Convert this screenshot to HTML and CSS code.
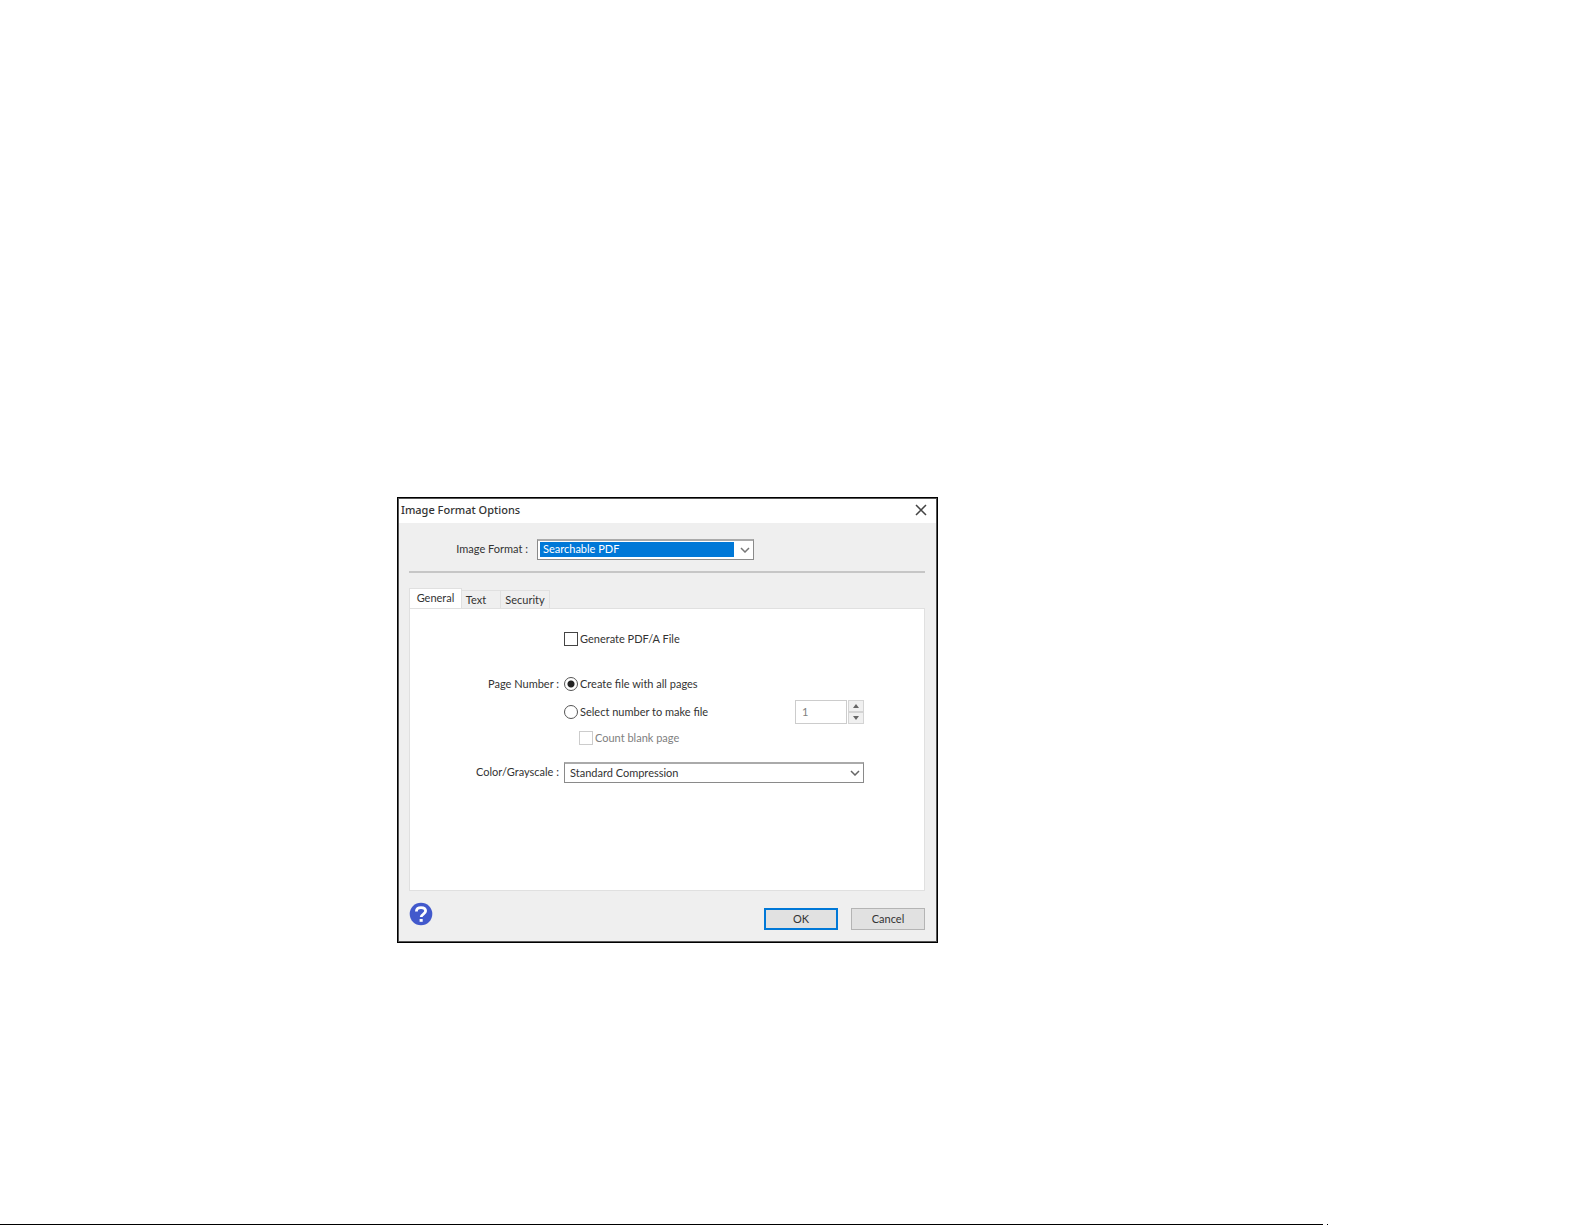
FILE: index.html
```html
<!DOCTYPE html>
<html lang="en">
<head>
<meta charset="utf-8">
<title>Image Format Options</title>
<link rel="stylesheet" href="styles.css">
</head>
<body>
<main class="page">
  <section class="dialog" role="dialog" aria-labelledby="dialog-title">
    <header class="titlebar">
      <h1 class="title" id="dialog-title">Image Format Options</h1>
      <button class="close" type="button" aria-label="Close">
        <svg width="12" height="12" viewBox="0 0 12 12"><path d="M1 1l10 10M11 1L1 11" fill="none" stroke="#444" stroke-width="1.5"/></svg>
      </button>
    </header>
    <form class="content">
      <div class="format-row">
        <label class="format-label" for="format">Image Format :</label>
        <span class="select-wrap format-wrap">
          <select class="select select-active" id="format"><option>Searchable PDF</option></select>
          <svg class="chevron" width="10" height="6" viewBox="0 0 10 6"><path d="M1 1l4 4 4-4" fill="none" stroke="#777" stroke-width="1.5"/></svg>
        </span>
      </div>
      <hr class="separator">
      <div class="tabs" role="tablist">
        <button class="tab tab-selected" type="button" role="tab" aria-selected="true">General</button>
        <button class="tab tab-text" type="button" role="tab">Text</button>
        <button class="tab tab-security" type="button" role="tab">Security</button>
      </div>
      <div class="panel" role="tabpanel">
        <div class="field">
          <label class="option"><input class="box" type="checkbox">Generate PDF/A File</label>
        </div>
        <div class="group" role="radiogroup" aria-labelledby="pages-label">
          <div class="field">
            <span class="label" id="pages-label">Page Number :</span>
            <label class="option"><input class="radio" type="radio" name="pages" checked>Create file with all pages</label>
          </div>
          <div class="field">
            <label class="option"><input class="radio" type="radio" name="pages">Select number to make file</label>
            <span class="spinner">
              <input class="number" type="text" value="1" aria-label="Number of pages" disabled>
              <span class="steps">
                <button class="step" type="button" aria-label="Increase" disabled><svg width="6" height="4" viewBox="0 0 6 4"><path d="M3 0l3 4H0z" fill="#666"/></svg></button>
                <button class="step" type="button" aria-label="Decrease" disabled><svg width="6" height="4" viewBox="0 0 6 4"><path d="M3 4l3-4H0z" fill="#666"/></svg></button>
              </span>
            </span>
          </div>
          <div class="field">
            <label class="option option-nested"><input class="box" type="checkbox" disabled>Count blank page</label>
          </div>
        </div>
        <div class="field">
          <label class="label" for="compression">Color/Grayscale :</label>
          <span class="select-wrap compression-wrap">
            <select class="select" id="compression"><option>Standard Compression</option></select>
            <svg class="chevron" width="10" height="6" viewBox="0 0 10 6"><path d="M1 1l4 4 4-4" fill="none" stroke="#666" stroke-width="1.5"/></svg>
          </span>
        </div>
      </div>
      <footer class="actions">
        <button class="help" type="button" aria-label="Help">
          <svg width="24" height="24" viewBox="0 0 24 24"><circle cx="12" cy="12" r="11.3" fill="#4259cc"/><path d="M7.4 9.4C7.4 6.7 9.3 5.6 12 5.6s4.6 1.2 4.6 3.5c0 3.1-4.4 2.9-4.4 6" fill="none" stroke="#fff" stroke-width="2.8"/><path d="M10.6 17h3.1v2.8h-3.1z" fill="#fff"/></svg>
        </button>
        <button class="button button-default" type="submit">OK</button>
        <button class="button" type="button">Cancel</button>
      </footer>
    </form>
  </section>
  <div class="page-rule"><span class="rule-line"></span><span class="rule-dot"></span></div>
</main>
</body>
</html>
```
FILE: styles.css
```css
* { box-sizing: border-box; }

body {
  margin: 0;
  background: #fff;
  color: #333;
  font-family: Lato, "Open Sans", sans-serif;
  font-size: 11px;
  line-height: 16px;
}

button, input, select { font: inherit; color: inherit; }
button { padding: 0; border: 0; background: none; }
svg { display: block; }

.page {
  display: flex;
  flex-direction: column;
  min-height: 100vh;
  padding: 497px 0 0 397px;
}

.dialog {
  width: 541px;
  border: 1px solid #000;
  box-shadow: inset 0 0 0 1px #555;
  padding: 1px;
  background: #efefef;
}

.titlebar {
  display: flex;
  align-items: center;
  justify-content: space-between;
  height: 24px;
  padding: 0 8px 2px 2px;
  background: #fff;
}

.title {
  margin: 0;
  font-family: "Noto Sans", "Open Sans", sans-serif;
  font-size: 11px;
  font-weight: 500;
}

.close { padding: 1px; }

.content { padding: 15px 11px 11px 10px; }

.format-row {
  display: flex;
  align-items: center;
  height: 22px;
}

.format-label { width: 128px; padding-right: 9px; text-align: right; }

.select-wrap { position: relative; display: block; }
.format-wrap { width: 217px; }
.compression-wrap { width: 300px; }

.select {
  display: block;
  appearance: none;
  width: 100%;
  height: 21px;
  padding: 0 24px 0 5px;
  border: 1px solid #8a8a8a;
  border-top: 2px solid #aaa;
  border-radius: 0;
  background: #fff;
}

.select-active {
  padding-bottom: 1px;
  background: linear-gradient(#0078d7, #0078d7) 2px 1px / 194px 15px no-repeat #fff;
  color: #fff;
}

.chevron { position: absolute; top: 8px; right: 4px; }

.separator {
  height: 2px;
  margin: 11px 0 15px;
  border: 0;
  background: #c6c6c6;
}

.tabs { display: flex; align-items: flex-end; height: 20px; }

.tab {
  height: 18px;
  border: 1px solid #e0e0e0;
  border-width: 1px 1px 0 0;
}

.tab-selected {
  height: 20px;
  width: 53px;
  padding-bottom: 2px;
  border-left-width: 1px;
  background: #fff;
}

.tab-text { width: 39px; padding-right: 10px; }
.tab-security { width: 49px; }

.panel {
  display: flex;
  flex-direction: column;
  height: 283px;
  padding: 19px 0;
  border: 1px solid #e0e0e0;
  background: #fff;
}

.field {
  display: grid;
  grid-template-columns: 154px 231px auto;
  align-items: center;
  height: 22px;
}

.label { padding-right: 5px; text-align: right; }
.option { grid-column: 2; display: flex; align-items: center; gap: 2px; white-space: nowrap; }
.option-nested { padding-left: 15px; }
.option-nested { color: #808080; }
.compression-wrap { grid-column: 2 / 4; }

.group {
  display: flex;
  flex-direction: column;
  gap: 5px;
  margin: 23px 0 12px;
}

.box, .radio {
  appearance: none;
  flex: none;
  width: 14px;
  height: 14px;
  margin: 0;
  border: 1px solid #444;
  background: #fff;
}

.radio { border-radius: 50%; border-color: #555; }
.radio:checked { background: radial-gradient(circle, #222 3px, #fff 4px); }
.box:disabled { border-color: #ccc; }

.spinner { display: flex; width: 69px; height: 24px; gap: 1px; }

.number {
  width: 52px;
  height: 24px;
  padding: 0 6px 2px;
  border: 1px solid #ccc;
  border-radius: 0;
  background: #fff;
  color: #808080;
}

.steps { display: flex; flex-direction: column; width: 16px; }

.step {
  display: flex;
  flex: 1;
  align-items: center;
  justify-content: center;
  border: 1px solid #d4d4d4;
  background: #f0f0f0;
}

.actions { display: flex; align-items: flex-start; gap: 13px; padding-top: 11px; }
.help { margin-right: auto; }

.button {
  width: 74px;
  height: 22px;
  margin-top: 6px;
  border: 1px solid #b4b4b4;
  background: #e1e1e1;
}

.button-default { border: 2px solid #0078d7; }

.page-rule { display: flex; gap: 4px; height: 1px; margin: auto 0 0 -397px; }
.rule-line { width: 1323px; background: #000; }
.rule-dot { width: 1px; background: #000; }
```
